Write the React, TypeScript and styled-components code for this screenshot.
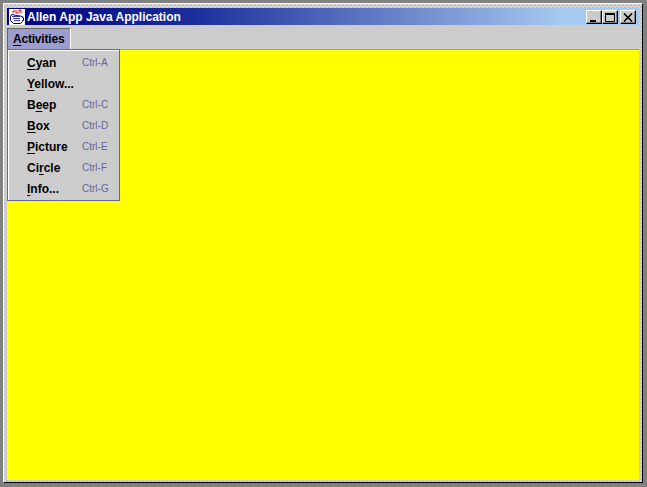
import React from 'react';
import styled, { createGlobalStyle } from 'styled-components';

const GlobalStyle = createGlobalStyle`
  html, body {
    margin: 0;
    padding: 0;
    background: #808080;
  }
`;

const Desktop = styled.div`
  width: 647px;
  height: 487px;
  box-sizing: border-box;
  padding: 3px 4px 4px 3px;
  background: #808080;
  font-family: "Liberation Sans", Arial, sans-serif;
`;

const Frame = styled.div`
  position: relative;
  height: 100%;
  box-sizing: border-box;
  display: flex;
  flex-direction: column;
  padding: 4px 3px 2px;
  background: repeating-conic-gradient(#c4c4c4 0 25%, #d4d4d4 0 50%) 0 0 / 4px 4px;
  border-top: 1px solid #ffffff;
  border-left: 1px solid #ffffff;
  border-right: 1px solid #000000;
  border-bottom: 1px solid #000000;
`;

const TitleBar = styled.div`
  height: 17px;
  flex: none;
  display: flex;
  align-items: center;
  padding: 0 3px 0 2px;
  background: linear-gradient(90deg, #000080 0%, #1d2f9c 30%, #a6caf0 88%, #a6caf0 100%);
`;

const TitleIcon = styled.svg`
  width: 16px;
  height: 16px;
  flex: none;
  margin-right: 2px;
`;

const TitleText = styled.span`
  flex: 1;
  color: #ffffff;
  font-size: 12px;
  font-weight: 700;
  white-space: nowrap;
`;

const WindowButtons = styled.div`
  display: flex;
  align-items: center;
  margin-top: 1px;
`;

const WindowButton = styled.button<{ $gap?: boolean }>`
  width: 16px;
  height: 14px;
  padding: 0;
  margin-left: ${props => (props.$gap ? '2px' : '0')};
  display: flex;
  align-items: center;
  justify-content: center;
  background: #cccccc;
  border: 1px solid;
  border-color: #ffffff #000000 #000000 #ffffff;
  box-shadow: inset -1px -1px 0 #808080;
`;

const ButtonGlyph = styled.svg`
  width: 10px;
  height: 9px;
  display: block;
`;

const MenuBar = styled.div`
  height: 25px;
  flex: none;
  display: flex;
  align-items: flex-end;
  background: #cccccc;
  border-bottom: 1px solid #9a9ab8;
  box-sizing: border-box;
`;

const MenuTitle = styled.div`
  height: 21px;
  width: 64px;
  box-sizing: border-box;
  padding: 0 0 0 5px;
  display: flex;
  align-items: center;
  background: #9c9ccf;
  border-top: 1px solid #666666;
  border-left: 1px solid #666666;
  border-right: 1px solid #ffffff;
  color: #000000;
  font-size: 12px;
  font-weight: 700;
  letter-spacing: -0.2px;
`;

const Mnemonic = styled.span`
  text-decoration: underline;
  text-underline-offset: 2px;
`;

const Canvas = styled.div`
  flex: 1;
  background: #ffff00;
`;

const Menu = styled.div`
  position: absolute;
  left: 3px;
  top: 45px;
  width: 113px;
  height: 152px;
  box-sizing: border-box;
  padding: 2px 0 0;
  background: #cccccc;
  border: 1px solid #666699;
  box-shadow: inset 1px 1px 0 #ffffff;
`;

const MenuRow = styled.div`
  height: 21px;
  display: grid;
  grid-template-columns: 55px 1fr;
  align-items: center;
  padding-left: 19px;
`;

const ItemLabel = styled.span`
  color: #000000;
  font-size: 12px;
  font-weight: 700;
  white-space: nowrap;
`;

const Shortcut = styled.span`
  color: #666699;
  font-size: 10px;
  white-space: nowrap;
`;

type Item = { before: string; key: string; after: string; shortcut?: string };

const items: Item[] = [
  { before: '', key: 'C', after: 'yan', shortcut: 'Ctrl-A' },
  { before: '', key: 'Y', after: 'ellow...' },
  { before: 'B', key: 'e', after: 'ep', shortcut: 'Ctrl-C' },
  { before: '', key: 'B', after: 'ox', shortcut: 'Ctrl-D' },
  { before: '', key: 'P', after: 'icture', shortcut: 'Ctrl-E' },
  { before: 'Ci', key: 'r', after: 'cle', shortcut: 'Ctrl-F' },
  { before: '', key: 'I', after: 'nfo...', shortcut: 'Ctrl-G' },
];

const App: React.FC = () => {
  return (
    <>
      <GlobalStyle />
      <Desktop>
        <Frame>
          <TitleBar>
            <TitleIcon viewBox="0 0 16 16">
              <rect x="0" y="0" width="16" height="16" fill="#ffffff" />
              <path d="M4 4V2h2M7 1v3h2M10 4V1h2v3" stroke="#e00000" strokeWidth="1" fill="none" />
              <path d="M2.5 5.5l-1 2v4l3 3h7l2-2v-1h1v-3h-1v-1z" stroke="#000080" strokeWidth="1" fill="#ffffff" />
              <path d="M3 7.5h8M4 9.5h7M5 11.5h6" stroke="#3a3a9c" strokeWidth="1" />
            </TitleIcon>
            <TitleText>Allen App Java Application</TitleText>
            <WindowButtons>
              <WindowButton>
                <ButtonGlyph viewBox="0 0 10 9">
                  <rect x="1" y="7" width="6" height="2" fill="#000000" />
                </ButtonGlyph>
              </WindowButton>
              <WindowButton>
                <ButtonGlyph viewBox="0 0 10 9">
                  <path d="M0.5 1.5h9v7h-9z" fill="none" stroke="#000000" />
                  <rect x="0" y="0" width="10" height="2" fill="#000000" />
                </ButtonGlyph>
              </WindowButton>
              <WindowButton $gap>
                <ButtonGlyph viewBox="0 0 10 9">
                  <path d="M1 0.5l8 8M9 0.5l-8 8" stroke="#000000" strokeWidth="1.6" />
                </ButtonGlyph>
              </WindowButton>
            </WindowButtons>
          </TitleBar>
          <MenuBar>
            <MenuTitle>
              <Mnemonic>A</Mnemonic>ctivities
            </MenuTitle>
          </MenuBar>
          <Canvas />
          <Menu>
            {items.map(item => (
              <MenuRow key={item.before + item.key + item.after}>
                <ItemLabel>
                  {item.before}
                  <Mnemonic>{item.key}</Mnemonic>
                  {item.after}
                </ItemLabel>
                {item.shortcut && <Shortcut>{item.shortcut}</Shortcut>}
              </MenuRow>
            ))}
          </Menu>
        </Frame>
      </Desktop>
    </>
  );
};

export default App;
